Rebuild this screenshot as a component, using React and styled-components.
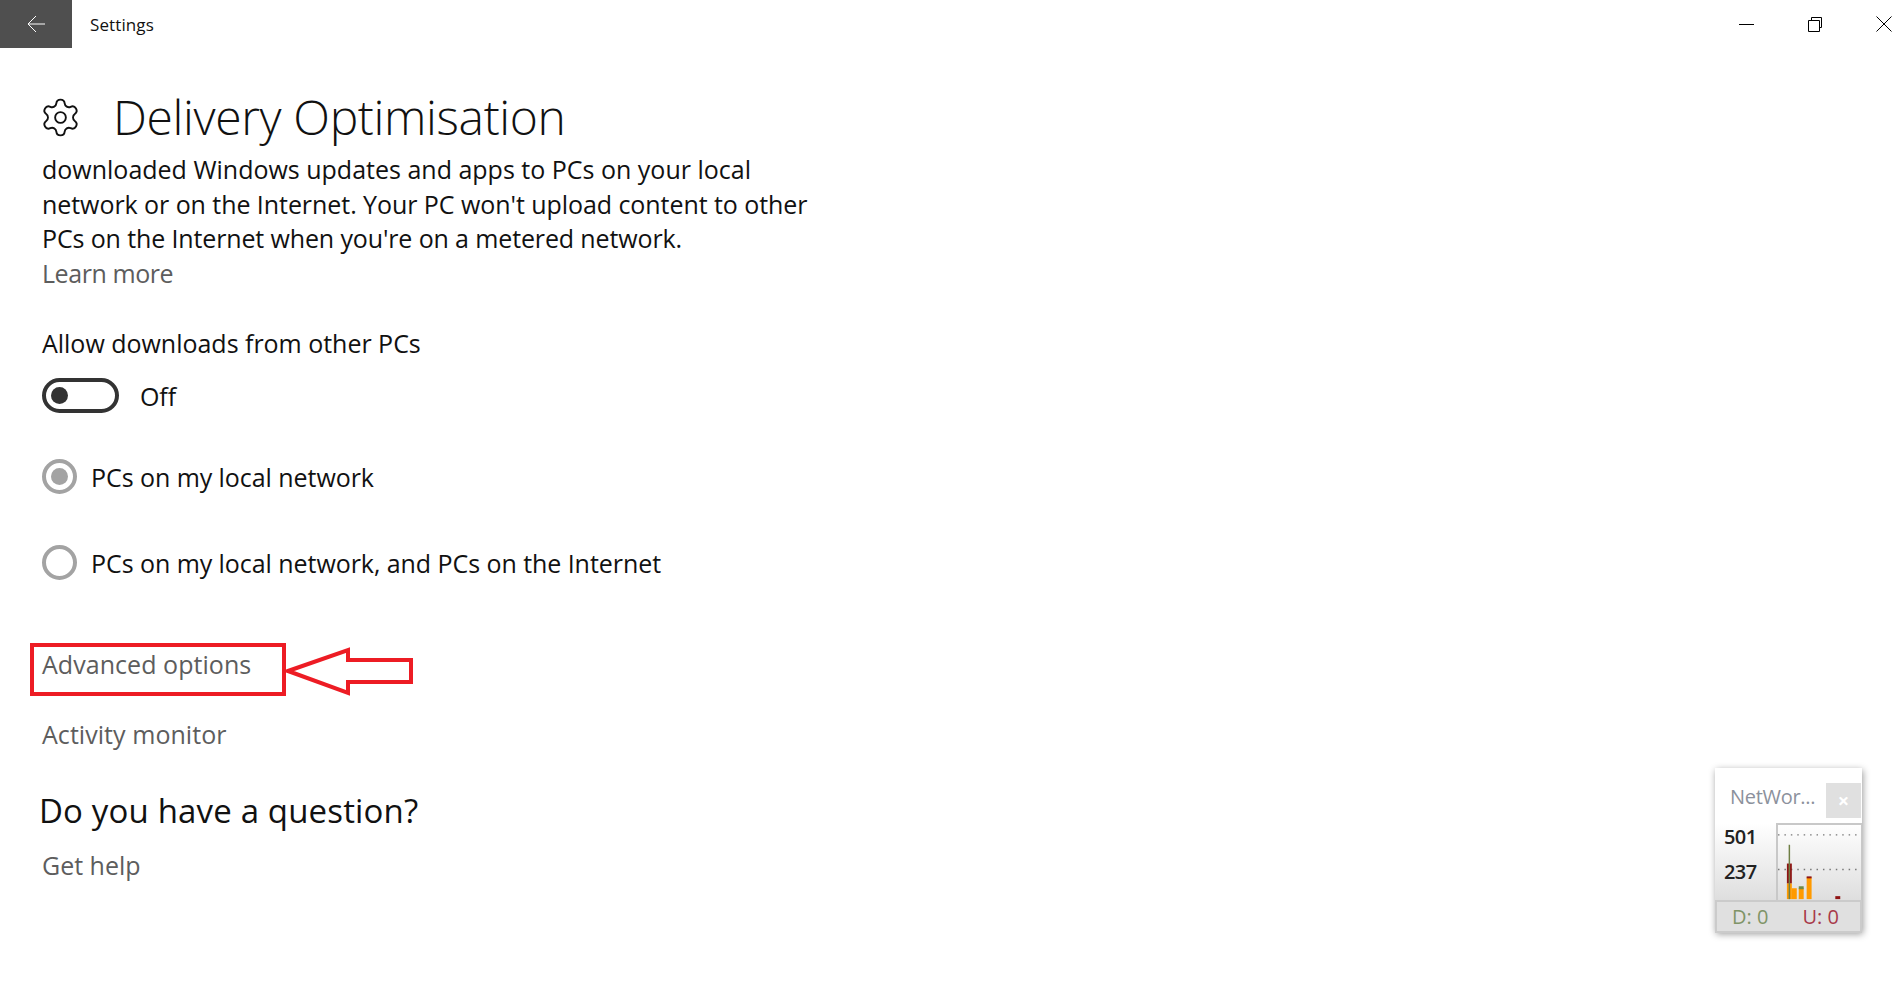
import styled, { createGlobalStyle } from 'styled-components';
import { Settings } from 'lucide-react';

const GlobalStyle = createGlobalStyle`
  html, body {
    margin: 0;
    padding: 0;
    background: #fff;
  }
  body {
    font-family: "Open Sans", "Noto Sans", "Liberation Sans", sans-serif;
    color: #000;
    overflow: hidden;
  }
`;

const Page = styled.div`
  position: relative;
  width: 1900px;
  height: 1006px;
  display: flex;
  flex-direction: column;
  background: #fff;
  overflow: hidden;
`;

const TitleBar = styled.header`
  display: flex;
  align-items: center;
  height: 48px;
  flex: none;
`;

const BackButton = styled.div`
  width: 72px;
  height: 48px;
  display: flex;
  align-items: center;
  justify-content: center;
  background: #4f4f4f;
  svg { display: block; }
`;

const AppName = styled.span`
  margin-left: 18px;
  font-size: 17px;
  letter-spacing: 0.1px;
  color: #111;
  flex: 1;
`;

const WindowButtons = styled.div`
  display: flex;
  align-items: center;
  gap: 53px;
  padding-right: 8px;
  svg { display: block; }
`;

const Main = styled.main`
  padding: 36px 0 0 42px;
  display: flex;
  flex-direction: column;
  align-items: flex-start;
`;

const PageHeader = styled.div`
  display: flex;
  align-items: center;
  height: 66px;
  margin-left: -3px;
  svg { display: block; }
`;

const Title = styled.h1`
  margin: 0 0 0 31px;
  font-size: 48px;
  line-height: 66px;
  font-weight: 300;
  letter-spacing: -0.36px;
  color: #111;
`;

const Description = styled.p`
  margin: 2px 0 0;
  width: 820px;
  font-size: 25px;
  line-height: 34.5px;
  color: #111;
`;

const DescriptionLine = styled.span`
  display: block;
  letter-spacing: ${(p) => p.$spacing}px;
`;

const Link = styled.a`
  display: block;
  font-size: 25px;
  line-height: 34px;
  letter-spacing: ${(p) => p.$spacing ?? 0.05}px;
  color: #5d5d5d;
  margin-top: ${(p) => p.$top || 0}px;
`;

const Label = styled.div`
  margin-top: 36px;
  font-size: 25px;
  line-height: 34px;
  letter-spacing: -0.02px;
  color: #111;
`;

const ToggleRow = styled.div`
  display: flex;
  align-items: center;
  margin-top: 19px;
  height: 34px;
`;

const ToggleTrack = styled.div`
  box-sizing: border-box;
  width: 77px;
  height: 35px;
  border: 4px solid #333;
  border-radius: 18px;
  display: flex;
  align-items: center;
  padding-left: 5px;
`;

const ToggleKnob = styled.div`
  width: 17px;
  height: 17px;
  border-radius: 50%;
  background: #333;
`;

const ToggleText = styled.span`
  margin-left: 21px;
  font-size: 25px;
  letter-spacing: -0.1px;
  color: #111;
`;

const RadioRow = styled.div`
  display: flex;
  align-items: center;
  height: 36px;
  margin-top: ${(p) => p.$top}px;
`;

const RadioCircle = styled.div`
  box-sizing: border-box;
  width: 35px;
  height: 35px;
  border-radius: 50%;
  border: 4px solid #a3a3a3;
  display: flex;
  align-items: center;
  justify-content: center;
  flex: none;
`;

const RadioDot = styled.div`
  width: 17px;
  height: 17px;
  border-radius: 50%;
  background: #a3a3a3;
`;

const RadioText = styled.span`
  margin-left: 14px;
  font-size: 25px;
  letter-spacing: -0.06px;
  color: #111;
`;

const Annotated = styled.div`
  position: relative;
  margin-top: 66px;
`;

const HighlightBox = styled.div`
  position: absolute;
  left: -12px;
  top: -4px;
  width: 256px;
  height: 53px;
  box-sizing: border-box;
  border: 4px solid #ed1c24;
`;

const ArrowMark = styled.svg`
  position: absolute;
  left: 244px;
  top: -4px;
  display: block;
`;

const Question = styled.h2`
  margin: 37px 0 0 -3px;
  font-size: 33px;
  line-height: 46px;
  font-weight: 400;
  letter-spacing: 0.16px;
  color: #111;
`;

/* floating network meter window */
const Meter = styled.aside`
  position: absolute;
  left: 1715px;
  top: 768px;
  width: 147px;
  height: 164px;
  display: flex;
  flex-direction: column;
  background: #fff;
  box-shadow: 1px 2px 7px rgba(0, 0, 0, 0.4);
`;

const MeterHead = styled.div`
  height: 55px;
  flex: none;
  display: flex;
  align-items: center;
  justify-content: space-between;
  padding: 10px 1px 0 15px;
  box-sizing: border-box;
`;

const MeterTitle = styled.span`
  margin-top: -8px;
  font-size: 20px;
  letter-spacing: -0.3px;
  color: #8c919c;
`;

const MeterClose = styled.div`
  width: 35px;
  height: 35px;
  background: #e0e0e0;
  color: #fff;
  font-size: 20px;
  font-weight: 700;
  display: flex;
  align-items: center;
  justify-content: center;
`;

const MeterBody = styled.div`
  flex: 1;
  display: flex;
  background: linear-gradient(180deg, #ffffff 0%, #dedede 100%);
`;

const MeterScale = styled.div`
  width: 61px;
  flex: none;
  display: flex;
  flex-direction: column;
  gap: 8px;
  padding: 0 0 0 9px;
  box-sizing: border-box;
  font-size: 20px;
  line-height: 27px;
  font-weight: 600;
  letter-spacing: -0.6px;
  color: #222;
`;

const MeterChart = styled.svg`
  flex: 1;
  display: block;
  border-left: 2px solid #c8c8c8;
  border-top: 2px solid #c8c8c8;
  border-right: 1px solid #c8c8c8;
`;

const MeterFooter = styled.div`
  height: 33px;
  flex: none;
  box-sizing: border-box;
  display: flex;
  align-items: center;
  border: 2px solid #cbcbcb;
  background: #e0e0e0;
  padding-left: 15px;
  gap: 34px;
  font-size: 20px;
  letter-spacing: 0;
`;

const MeterStat = styled.span`
  color: ${(p) => p.$color};
`;

const bars = [
  { x: 9, y: 59, h: 16, c: '#ff9a00' },
  { x: 14, y: 64, h: 11, c: '#ff9a00' },
  { x: 21, y: 64, h: 11, c: '#ff9a00' },
  { x: 29, y: 53, h: 22, c: '#ff9a00' },
  { x: 9, y: 39, h: 20, c: '#8f1414' },
  { x: 29, y: 52, h: 2, c: '#8f1414' },
  { x: 21, y: 62, h: 3, c: '#6f8a45' },
  { x: 58, y: 72, h: 3, c: '#8f1414' },
];

function App() {
  return (
    <Page>
      <GlobalStyle />
      <TitleBar>
        <BackButton>
          <svg width="18" height="18" viewBox="0 0 18 18" fill="none" stroke="#fff" strokeWidth="1">
            <path d="M1 9h17M9 1L1 9l8 8" />
          </svg>
        </BackButton>
        <AppName>Settings</AppName>
        <WindowButtons>
          <svg width="16" height="16" viewBox="0 0 16 16" fill="none" stroke="#000" strokeWidth="1">
            <path d="M1 8.5h15" />
          </svg>
          <svg width="16" height="16" viewBox="0 0 16 16" fill="none" stroke="#000" strokeWidth="1">
            <path d="M1.5 4.5h11v11h-11zM4.5 4.5v-3h10v10h-2" />
          </svg>
          <svg width="16" height="16" viewBox="0 0 16 16" fill="none" stroke="#000" strokeWidth="1">
            <path d="M0.5 0.5l15 15M15.5 0.5l-15 15" />
          </svg>
        </WindowButtons>
      </TitleBar>

      <Main>
        <PageHeader>
          <Settings size={43} strokeWidth={1.05} color="#111" />
          <Title>Delivery Optimisation</Title>
        </PageHeader>
        <Description>
          <DescriptionLine $spacing={0}>downloaded Windows updates and apps to PCs on your local</DescriptionLine>
          <DescriptionLine $spacing={-0.06}>network or on the Internet. Your PC won't upload content to other</DescriptionLine>
          <DescriptionLine $spacing={-0.13}>PCs on the Internet when you're on a metered network.</DescriptionLine>
        </Description>
        <Link $spacing={-0.43}>Learn more</Link>

        <Label>Allow downloads from other PCs</Label>
        <ToggleRow>
          <ToggleTrack>
            <ToggleKnob />
          </ToggleTrack>
          <ToggleText>Off</ToggleText>
        </ToggleRow>

        <RadioRow $top={46}>
          <RadioCircle>
            <RadioDot />
          </RadioCircle>
          <RadioText>PCs on my local network</RadioText>
        </RadioRow>
        <RadioRow $top={50}>
          <RadioCircle />
          <RadioText>PCs on my local network, and PCs on the Internet</RadioText>
        </RadioRow>

        <Annotated>
          <Link>Advanced options</Link>
          <HighlightBox />
          <ArrowMark width="130" height="54" viewBox="0 0 130 54" fill="none">
            <path
              d="M46 29L106 8V18H169V40H106V51Z"
              transform="translate(-44 -1)"
              stroke="#ed1c24"
              strokeWidth="4"
              fill="#fff"
            />
          </ArrowMark>
        </Annotated>
        <Link $top={36}>Activity monitor</Link>

        <Question>Do you have a question?</Question>
        <Link $top={14} $spacing={0}>Get help</Link>
      </Main>

      <Meter>
        <MeterHead>
          <MeterTitle>NetWor...</MeterTitle>
          <MeterClose>×</MeterClose>
        </MeterHead>
        <MeterBody>
          <MeterScale>
            <span>501</span>
            <span>237</span>
          </MeterScale>
          <MeterChart viewBox="0 0 84 76" preserveAspectRatio="none">
            <line x1="0" x2="84" y1="10" y2="10" stroke="#777" strokeWidth="1.5" strokeDasharray="1.5 5" />
            <line x1="0" x2="84" y1="45" y2="45" stroke="#777" strokeWidth="1.5" strokeDasharray="1.5 5" />
            {bars.map((b) => (
              <rect key={`${b.x}-${b.y}`} x={b.x} y={b.y} width="5" height={b.h} fill={b.c} />
            ))}
            <line x1="11.5" x2="11.5" y1="20" y2="75" stroke="#6f7f45" strokeWidth="1.5" />
          </MeterChart>
        </MeterBody>
        <MeterFooter>
          <MeterStat $color="#7f9467">D: 0</MeterStat>
          <MeterStat $color="#a83a4a">U: 0</MeterStat>
        </MeterFooter>
      </Meter>
    </Page>
  );
}

export default App;
